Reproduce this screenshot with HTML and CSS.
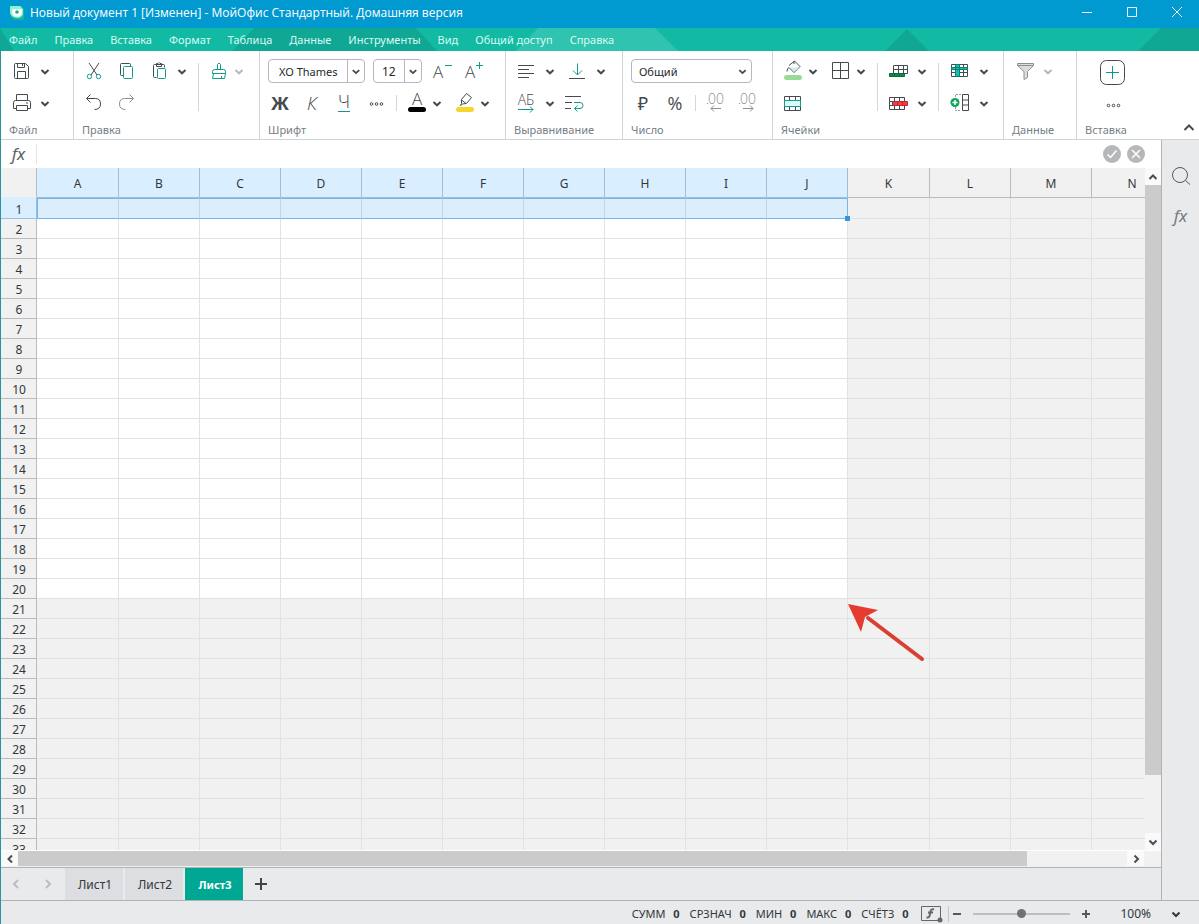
FILE: index.html
```html
<!DOCTYPE html>
<html lang="ru">
<head>
<meta charset="utf-8">
<title>Новый документ 1 [Изменен] - МойОфис Стандартный. Домашняя версия</title>
<link rel="stylesheet" href="styles.css">
</head>
<body>
<svg class="defs" aria-hidden="true">
  <symbol id="caret" viewBox="0 0 16 24"><path d="M4.500 11 8 14.300l3.500-3.300" fill="none" stroke="currentColor" stroke-width="2"/></symbol>
</svg>
<header class="titlebar">
  <svg class="logo" viewBox="0 0 16 16"><path d="M1 2q0-1 1-1h10l3 3v9q0 2-2 2H6Q1 13 1 8z" fill="#14b99c"/><path d="M1 2q0-1 1-1h9l3 3v5q-1 4-6 4Q1 12 1 7z" fill="#8ff0d2"/><path d="M4 5h8q1 6-4 6T4 5z" fill="#fff" stroke="#fff" stroke-width="1.500" stroke-linejoin="round"/><circle cx="8" cy="7" r="1.800" fill="#12ad98"/></svg>
  <h1 class="title">Новый документ 1 [Изменен] - МойОфис Стандартный. Домашняя версия</h1>
  <button class="win" aria-label="Свернуть"><svg viewBox="0 0 12 12"><path d="M1 6.500h10"/></svg></button>
  <button class="win" aria-label="Развернуть"><svg viewBox="0 0 12 12"><path d="M1.500 1.500h9v9h-9z"/></svg></button>
  <button class="win" aria-label="Закрыть"><svg viewBox="0 0 12 12"><path d="M1 1l10 10M11 1 1 11"/></svg></button>
</header>
<nav class="menubar">
  <svg class="pattern" aria-hidden="true"><path d="M0 0 14 23H0zM254 0h162l21 23H232zM885 23l22-22 22 22zM1161 0h2000v23H1138z" fill="#10a894"/><path d="M538 0h117l23 23H516z" fill="#30c3af"/></svg>
  <button>Файл</button><button>Правка</button><button>Вставка</button><button>Формат</button><button>Таблица</button><button>Данные</button><button>Инструменты</button><button>Вид</button><button>Общий доступ</button><button>Справка</button>
</nav>
<div class="frame">
<section class="ribbon">
  <div class="group g-file">
    <div class="tools">
      <div class="row">
        <button class="icon" aria-label="Сохранить"><svg viewBox="0 0 24 24"><path d="M5.500 5.500q0-1 1-1h10l3 3v11q0 1-1 1h-12q-1 0-1-1zM8.500 4.500v4h7v-4M13.500 5v2M8.500 19.500v-7h8v7"/></svg></button><button class="caret wide" aria-label="Варианты сохранения"><svg><use href="#caret"/></svg></button>
      </div>
      <div class="row">
        <button class="icon" aria-label="Печать"><svg viewBox="0 0 24 24"><path d="M7.500 9.500v-6h11v6M7.500 17.500h-3v-6q0-2 2-2h13q2 0 2 2v6h-3M7.500 14.500h11v5h-11zM17 12h2"/></svg></button><button class="caret wide" aria-label="Варианты печати"><svg><use href="#caret"/></svg></button>
      </div>
    </div>
    <h2>Файл</h2>
  </div>
  <div class="group g-edit">
    <div class="tools side">
      <div>
        <div class="row spaced">
          <button class="icon" aria-label="Вырезать"><svg viewBox="0 0 24 24"><path d="M7 4l8 12M17 4 9 16"/><g class="green"><circle cx="7.500" cy="17.500" r="2.200"/><circle cx="16.500" cy="17.500" r="2.200"/></g></svg></button>
          <button class="icon" aria-label="Копировать"><svg viewBox="0 0 24 24"><path d="M9.500 16.500h-2q-1 0-1-1v-10q0-1 1-1h8q1 0 1 1v2"/><rect class="green" x="9.500" y="7.500" width="9" height="12" rx="1"/></svg></button>
          <div class="split"><button class="icon" aria-label="Вставить"><svg viewBox="0 0 24 24"><path d="M10.500 18.500h-2q-1 0-1-1v-11q0-1 1-1h9q1 0 1 1v2M10.500 7.500v-3h1.500q1-2 2 0h1.500v3z"/><rect class="green" x="11.500" y="9.500" width="8" height="10" rx="1"/></svg></button><button class="caret wide" aria-label="Варианты вставки"><svg><use href="#caret"/></svg></button></div>
        </div>
        <div class="row spaced">
          <button class="icon" aria-label="Отменить"><svg viewBox="0 0 24 24"><path d="M8.500 3.500l-4 4 4 4M5 7.500h8.500q5 0 5 5.500t-6 5.500"/></svg></button>
          <button class="icon muted" aria-label="Повторить"><svg viewBox="0 0 24 24"><path d="M15.500 3.500l4 4-4 4M19 7.500h-8.500q-5 0-5 5.500t6 5.500"/></svg></button>
        </div>
      </div>
      <span class="sep"></span>
      <div class="row"><button class="icon" aria-label="Формат по образцу"><svg class="green" viewBox="0 0 24 24"><path d="M10.500 10.500v-5q1.500-3 3 0v5M5.500 14.500v-2q0-2 2-2h9q2 0 2 2v2zM6.500 14.500l-1 5h12l1-5M14.500 19v-2"/></svg></button><button class="caret faint" aria-label="Варианты образца"><svg><use href="#caret"/></svg></button></div>
    </div>
    <h2>Правка</h2>
  </div>
  <div class="group g-font">
    <div class="tools">
      <div class="row spaced">
        <span class="combo family"><select aria-label="Шрифт"><option>XO Thames</option></select><svg><use href="#caret"/></svg></span>
        <span class="combo size"><select aria-label="Размер шрифта"><option>12</option></select><svg><use href="#caret"/></svg></span>
        <button class="icon" aria-label="Уменьшить шрифт"><svg viewBox="0 0 24 24"><text x="3" y="19" class="t-letter">A</text><path class="green" d="M15 6.500h7"/></svg></button>
        <button class="icon" aria-label="Увеличить шрифт"><svg viewBox="0 0 24 24"><text x="3" y="19" class="t-letter">A</text><path class="green" d="M14 6.500h7M17.500 3v7"/></svg></button>
      </div>
      <div class="row spaced">
        <button class="icon txt bold" aria-label="Полужирный">Ж</button>
        <button class="icon txt italic" aria-label="Курсив">К</button>
        <button class="icon" aria-label="Подчеркнутый"><svg viewBox="0 0 24 24"><text x="12" y="17" class="t-big mid">Ч</text><path class="green" d="M6 20.500h12"/></svg></button>
        <button class="icon" aria-label="Другие параметры"><svg viewBox="0 0 24 24"><circle cx="7.500" cy="13" r="1.300"/><circle cx="12.500" cy="13" r="1.300"/><circle cx="17.500" cy="13" r="1.300"/></svg></button>
        <span class="sep short"></span>
        <div class="split"><button class="icon" aria-label="Цвет текста"><svg viewBox="0 0 24 24"><text x="12" y="14" class="t-letter mid">A</text><path d="M5.500 18.500h13" stroke="#000" stroke-width="5" stroke-linecap="round"/></svg></button><button class="caret" aria-label="Выбор цвета текста"><svg><use href="#caret"/></svg></button></div>
        <div class="split"><button class="icon" aria-label="Цвет выделения"><svg viewBox="0 0 24 24"><path d="M8.500 8.500l5-6 5 4-5 6-4 .5-2 1.500 1-2zM8.500 9l4.500 3.500"/><path d="M5.500 18.500h13" stroke="#f7d52c" stroke-width="5" stroke-linecap="round"/></svg></button><button class="caret" aria-label="Выбор цвета выделения"><svg><use href="#caret"/></svg></button></div>
      </div>
    </div>
    <h2>Шрифт</h2>
  </div>
  <div class="group g-align">
    <div class="tools">
      <div class="row">
        <button class="icon" aria-label="По левому краю"><svg viewBox="0 0 24 24"><path d="M4 6.500h16M4 10.500h11M4 14.500h16M4 18.500h11"/></svg></button><button class="caret wide" aria-label="Варианты выравнивания"><svg><use href="#caret"/></svg></button>
        <button class="icon next" aria-label="По нижнему краю"><svg viewBox="0 0 24 24"><path class="green" d="M12.500 4.500v11M8 11.500l4.500 4.500L17 11.500"/><path d="M4 19.500h16"/></svg></button><button class="caret wide" aria-label="Варианты по вертикали"><svg><use href="#caret"/></svg></button>
      </div>
      <div class="row">
        <button class="icon" aria-label="Направление текста"><svg viewBox="0 0 24 24"><text x="12" y="14" class="t-small mid">АБ</text><path class="green" d="M4 18.500h15M16 15.500l3 3-3 3"/></svg></button><button class="caret wide" aria-label="Варианты направления"><svg><use href="#caret"/></svg></button>
        <button class="icon" aria-label="Переносить текст"><svg viewBox="0 0 24 24"><path d="M3 5.500h16M3 11.500h7M3 17.500h6"/><path class="green" d="M12 11.500h6q3 0 3 3t-3 3h-5.500M15.500 14.500l-3 3 3 3"/></svg></button>
      </div>
    </div>
    <h2>Выравнивание</h2>
  </div>
  <div class="group g-num">
    <div class="tools">
      <div class="row"><span class="combo format"><select aria-label="Формат числа"><option>Общий</option></select><svg><use href="#caret"/></svg></span></div>
      <div class="row spaced">
        <button class="icon txt" aria-label="Денежный">₽</button>
        <button class="icon txt light" aria-label="Процентный">%</button>
        <span class="sep short"></span>
        <button class="icon muted" aria-label="Уменьшить разрядность"><svg viewBox="0 0 24 24"><text x="12" y="13" class="t-small mid">00</text><path d="M17 17.500H7M10 14.500l-3 3 3 3M3 12.500h1"/></svg></button>
        <button class="icon muted" aria-label="Увеличить разрядность"><svg viewBox="0 0 24 24"><text x="12" y="13" class="t-small mid">00</text><path d="M7 17.500h10M14 14.500l3 3-3 3M3 12.500h1"/></svg></button>
      </div>
    </div>
    <h2>Число</h2>
  </div>
  <div class="group g-cells">
    <div class="tools side">
      <div>
        <div class="row spaced">
          <div class="split"><button class="icon" aria-label="Заливка"><svg viewBox="0 0 24 24"><path d="M8 6.500l5.500-4.500L19 7.500l-6 6-5-5q-2 .5-2 4M13 5V2"/><path d="M9 8.500h9l-5 4.500z" fill="#d5eaf0" stroke="none"/><path d="M5.500 18.500h13" stroke="#98db98" stroke-width="5" stroke-linecap="round"/></svg></button><button class="caret" aria-label="Выбор заливки"><svg><use href="#caret"/></svg></button></div>
          <div class="split"><button class="icon" aria-label="Границы"><svg viewBox="0 0 24 24"><path d="M3.500 3.500h16v16h-16zM11.500 3.500v16M3.500 11.500h16"/></svg></button><button class="caret" aria-label="Варианты границ"><svg><use href="#caret"/></svg></button></div>
        </div>
        <div class="row"><button class="icon" aria-label="Объединить ячейки"><svg viewBox="0 0 24 24"><path d="M3.500 5.500h16v14h-16zM8.500 5.500v14M14.500 5.500v14"/><path d="M3.500 9.500h16v6h-16z" fill="#d9fbf6" stroke="#10a08c"/></svg></button></div>
      </div>
      <span class="sep"></span>
      <div>
        <div class="row"><button class="icon" aria-label="Вставить строку"><svg viewBox="0 0 24 24"><path d="M7.500 6.500h14v8h-14zM7.500 10.500h14M12.500 6.500v8M17.500 6.500v8"/><path d="M3.500 14.500h15v3h-15z" fill="#13854f" stroke="#086b3b"/><path d="M8.500 15v3M13.500 15v3" stroke="#086b3b"/></svg></button><button class="caret wide" aria-label="Варианты вставки строк"><svg><use href="#caret"/></svg></button></div>
        <div class="row"><button class="icon" aria-label="Удалить строку"><svg viewBox="0 0 24 24"><path d="M3.500 6.500h15v12h-15zM8.500 6.500v12M13.500 6.500v12"/><path d="M6.500 10.500h15v4h-15z" fill="#ed4149" stroke="#c2272f"/><path d="M11.500 11v3M16.500 11v3" stroke="#c2272f"/><path d="M3.500 10.500h3v4h-3z" fill="#fff"/></svg></button><button class="caret wide" aria-label="Варианты удаления строк"><svg><use href="#caret"/></svg></button></div>
      </div>
      <span class="sep"></span>
      <div>
        <div class="row"><button class="icon" aria-label="Закрепить область"><svg viewBox="0 0 24 24"><path d="M3.500 5.500h16v12h-16zM3.500 13.500h16M7.500 5.500v12M11.500 5.500v12M15.500 5.500v12"/><path d="M3.500 8.500h16v2h-16zM7.500 5.500h4v12h-4z" fill="#17c0a8" stroke="#0b8073"/></svg></button><button class="caret wide" aria-label="Варианты закрепления"><svg><use href="#caret"/></svg></button></div>
        <div class="row"><button class="icon" aria-label="Добавить ячейки"><svg viewBox="0 0 24 24"><path d="M14.500 3.500h6v16h-6zM14.500 9h6M14.500 14h6"/><path d="M13 3.500H7.500v16H13" stroke="#999" stroke-dasharray="2 1"/><circle cx="7" cy="11.500" r="4.500" fill="#0ca35b" stroke="none"/><path d="M4.500 11.500h5M7 9v5" stroke="#fff" stroke-width="1.500"/></svg></button><button class="caret wide" aria-label="Варианты добавления"><svg><use href="#caret"/></svg></button></div>
      </div>
    </div>
    <h2>Ячейки</h2>
  </div>
  <div class="group g-data">
    <div class="tools"><div class="row"><button class="icon muted" aria-label="Фильтр"><svg viewBox="0 0 24 24"><path d="M5.500 4.500h16v2l-6 6v6l-3.500 2v-8l-6.500-6z" fill="#ddd"/><path d="M6 6.500h15"/></svg></button><button class="caret wide faint" aria-label="Варианты фильтра"><svg><use href="#caret"/></svg></button></div></div>
    <h2>Данные</h2>
  </div>
  <div class="group g-insert">
    <div class="tools">
      <div class="row"><button class="icon large" aria-label="Вставка объекта"><svg viewBox="0 0 32 32"><rect x="4.500" y="5.500" width="24" height="24" rx="6"/><path class="green" d="M16.500 11v13M10 17.500h13"/></svg></button></div>
      <div class="row"><button class="icon large" aria-label="Ещё"><svg viewBox="0 0 32 32"><circle cx="12.500" cy="18.500" r="1.300"/><circle cx="17.500" cy="18.500" r="1.300"/><circle cx="22.500" cy="18.500" r="1.300"/></svg></button></div>
    </div>
    <h2>Вставка</h2>
  </div>
  <button class="collapse" aria-label="Свернуть панель"><svg viewBox="0 0 16 16"><path d="M3.500 10 8 5.500l4.500 4.500" stroke-width="2"/></svg></button>
</section>
<div class="body">
  <main class="work">
    <div class="formula">
      <label class="fx" for="formula">fx</label>
      <input id="formula" type="text">
      <button class="round" aria-label="Принять"><svg viewBox="0 0 18 18"><path d="M4.500 9.500l3 3 6-7"/></svg></button>
      <button class="round" aria-label="Отклонить"><svg viewBox="0 0 18 18"><path d="M5 5l8 8M13 5l-8 8"/></svg></button>
    </div>
    <div class="sheet">
      <div class="cells"><table id="grid"></table>
        <svg class="pointer" viewBox="0 0 80 60" aria-hidden="true"><path d="M20 14 74 55" stroke="#d93f33" stroke-width="4" stroke-linecap="round"/><path d="M0 0l30 6-13 7-4 15z" fill="#e53b30"/></svg>
      </div>
      <div class="vscroll"><button aria-label="Вверх"><svg viewBox="0 0 16 16"><path d="M4.500 10 8 6.500l3.500 3.500"/></svg></button><div class="lane"><span class="thumb"></span></div><button aria-label="Вниз"><svg viewBox="0 0 16 16"><path d="M4.500 6.500 8 10l3.500-3.500"/></svg></button></div>
    </div>
    <div class="hscroll"><button aria-label="Влево"><svg viewBox="0 0 16 16"><path d="M10 4.500 6.500 8l3.500 3.500"/></svg></button><div class="lane"><span class="thumb"></span></div><button aria-label="Вправо"><svg viewBox="0 0 16 16"><path d="M6.500 4.500 10 8l-3.500 3.500"/></svg></button></div>
    <div class="tabs">
      <button class="step" aria-label="Предыдущий лист"><svg viewBox="0 0 16 16"><path d="M10 4 6 8l4 4"/></svg></button>
      <button class="step" aria-label="Следующий лист"><svg viewBox="0 0 16 16"><path d="M6 4l4 4-4 4"/></svg></button>
      <button class="tab">Лист1</button><button class="tab">Лист2</button><button class="tab active">Лист3</button>
      <button class="add" aria-label="Добавить лист"><svg viewBox="0 0 16 16"><path d="M2 8h12M8 2v12"/></svg></button>
    </div>
  </main>
  <aside class="panel">
    <button aria-label="Поиск"><svg viewBox="0 0 24 24"><circle cx="11" cy="11" r="7.500"/><path d="M16.500 16.500 21 20.500"/></svg></button>
    <button class="fx">fx</button>
  </aside>
</div>
<footer class="status">
  <span>СУММ <b>0</b></span><span>СРЗНАЧ <b>0</b></span><span>МИН <b>0</b></span><span>МАКС <b>0</b></span><span>СЧЁТЗ <b>0</b></span>
  <div class="view">
    <button class="fn" aria-label="Функции"><svg viewBox="0 0 24 18"><path d="M1.500 1.500h19v14h-19z"/><path d="M14 4.500q-3-1-3.500 2L9.500 11q-.5 2-3 1.500M8 7.500h5" stroke-width="2"/><circle cx="20" cy="15" r="2.500" fill="#666" stroke="none"/></svg></button>
    <div class="zoom">
      <button aria-label="Мельче"><svg viewBox="0 0 16 16"><path d="M4 8h8"/></svg></button>
      <input type="range" min="0" max="100" value="50" aria-label="Масштаб">
      <button aria-label="Крупнее"><svg viewBox="0 0 16 16"><path d="M4 8h8M8 4v8"/></svg></button>
    </div>
  </div>
  <button class="percent">100%<svg viewBox="0 0 16 16"><path d="M4.500 6.500 8 10l3.500-3.500"/></svg></button>
</footer>
</div>
<script src="script.js"></script>
</body>
</html>
```
FILE: styles.css
```css
* { box-sizing: border-box; }
body {
  margin: 0;
  height: 100vh;
  display: flex;
  flex-direction: column;
  overflow: hidden;
  font: 12px/16px "Noto Sans", sans-serif;
  color: #33373b;
}
button { border: 0; padding: 0; background: none; font: inherit; color: inherit; display: flex; align-items: center; justify-content: center; flex: none; }
svg { display: block; fill: none; stroke: currentColor; flex: none; }
.defs { position: absolute; width: 0; height: 0; }

.titlebar { flex: none; height: 28px; display: flex; align-items: center; padding-left: 9px; background: #0099d0; color: #fff; }
.logo { width: 16px; height: 16px; stroke: none; margin-bottom: 2px; }
.title { flex: 1; margin: 0 0 0 5px; font: 400 12px/26px "Open Sans", "Noto Sans", sans-serif; padding-bottom: 2px; white-space: nowrap; }
.win { width: 45px; height: 24px; margin-bottom: 4px; }
.win svg { width: 12px; height: 12px; }

.menubar { flex: none; position: relative; height: 23px; display: flex; align-items: center; gap: 17px; padding-left: 9px; background: #12baa4; color: #d8fbf3; font-size: 11px; overflow: hidden; }
.menubar button { position: relative; padding-top: 1px; }
.pattern { position: absolute; inset: 0; width: 100%; height: 100%; stroke: none; }

.frame { flex: 1; min-height: 0; display: flex; flex-direction: column; border-left: 1px solid #2b93a0; }

.ribbon { flex: none; position: relative; display: flex; background: #fff; border-bottom: 1px solid #d0d3d6; color: #454a4f; }
.group { display: flex; flex-direction: column; padding: 4px 0 0 8px; border-right: 1px solid #d0d3d6; }
.group h2 { margin: 0; padding-top: 2px; font-size: 11px; font-weight: 400; line-height: 18px; color: #767d84; }
.g-file { width: 73px; }
.g-edit { width: 186px; }
.g-font { width: 246px; }
.g-align { width: 117px; }
.g-num { width: 150px; }
.g-cells { width: 231px; }
.g-data { width: 73px; }
.g-insert { flex: 1; border-right: 0; }
.tools { height: 64px; }
.side { display: flex; }
.row { display: flex; align-items: center; height: 32px; }
.spaced { gap: 8px; }
.split { display: flex; }
.icon { width: 24px; height: 32px; }
.icon svg { width: 24px; height: 24px; overflow: visible; }
.large, .large svg { width: 32px; height: 32px; }
.g-insert .row { padding-left: 11px; }
.caret { width: 16px; height: 32px; }
.caret svg { width: 16px; height: 24px; }
.wide { width: 24px; }
.next { margin-left: 3px; }
.muted { color: #8c8f92; }
.faint { color: #b5b8ba; }
.green { stroke: #12998a; }
.sep { width: 1px; height: 48px; margin: 8px 8px 0 4px; background: #d5d8da; }
.short { height: 16px; margin: 0; }
.g-cells .sep:nth-of-type(1) { margin-left: 8px; }
.g-cells .sep:nth-of-type(2) { margin-right: 9px; }
.txt { font-size: 18px; }
.bold { font-weight: 700; }
.light { font-family: "Open Sans", "Noto Sans", sans-serif; }
.italic { font-family: "Open Sans", "Noto Sans", sans-serif; font-style: italic; font-weight: 300; }
.icon text { fill: currentColor; stroke: none; font-family: "Open Sans", "Noto Sans", sans-serif; font-weight: 300; }
.mid { text-anchor: middle; }
.t-letter { font-size: 17px; }
.t-big { font-size: 18px; }
.t-small { font-size: 14px; }

.combo { position: relative; height: 24px; border: 1px solid #b9b4c0; border-radius: 4px; }
.combo select { appearance: none; width: 100%; height: 100%; border: 0; padding: 1px 18px 0 10px; background: none; font: inherit; font-size: 11px; color: #26292c; }
.combo svg { position: absolute; top: 0; right: 0; width: 17px; height: 22px; border-left: 1px solid #b9b4c0; pointer-events: none; }
.family { width: 97px; }
.size { width: 49px; }
.size select { padding-left: 8px; font-size: 12px; }
.format { width: 121px; }
.format select { padding-left: 7px; }
.format svg { border: 0; }
.collapse { position: absolute; right: 2px; bottom: 3px; width: 16px; height: 16px; }
.collapse svg { width: 16px; height: 16px; }

.body { flex: 1; min-height: 0; display: flex; }
.work { flex: 1; min-width: 0; display: flex; flex-direction: column; border-right: 1px solid #b0b3b6; }
.formula { flex: none; height: 28px; display: flex; align-items: center; gap: 6px; padding-right: 16px; background: #fff; }
.fx { font-size: 17px; font-style: italic; color: #5c6064; text-align: center; }
.formula .fx { width: 36px; line-height: 20px; border-right: 1px solid #e2e4e6; }
.formula input { flex: 1; height: 24px; border: 0; outline: 0; font: inherit; }
.round { width: 18px; height: 18px; border-radius: 9px; background: #b5b7b9; color: #fff; }
.round svg { width: 18px; height: 18px; stroke-width: 1.5px; }

.sheet { flex: 1; min-height: 0; display: flex; }
.cells { position: relative; flex: 1; min-width: 0; overflow: hidden; background: #f1f1f1; }
table { table-layout: fixed; width: 1172px; border-spacing: 0; }
th, td { padding: 0; border: solid #e1e2e2; border-width: 0 1px 1px 0; }
th { font-weight: 400; color: #33373b; background: #f1f1f1; border-color: #b9bcbf; overflow: hidden; }
.col-side { width: 36px; }
.col { width: 81px; }
.col-edge { width: 82px; }
thead tr { height: 30px; }
thead th { padding-top: 2px; }
tbody tr { height: 20px; }
tbody tr:first-child { height: 21px; }
tbody th { line-height: 17px; padding: 2px 0 0 1px; }
td.page { background: #fff; }
thead th:first-child { border-bottom-color: #d9efff; }
th.marked { background: #d9efff; border-color: #9fbfd8; }
td.selected { position: relative; background: #dcedfc; border-top: 1px solid #79b4e6; border-bottom-color: #79b4e6; border-right-color: #bcd6ec; }
td.selected:nth-child(2) { border-left: 1px solid #79b4e6; }
td.selected:nth-child(11) { border-right-color: #79b4e6; }
.handle { position: absolute; right: -3px; bottom: -3px; width: 5px; height: 5px; background: #3794dd; z-index: 1; }
.pointer { position: absolute; left: 847px; top: 436px; width: 80px; height: 60px; stroke: none; }

.vscroll { flex: none; width: 16px; display: flex; flex-direction: column; background: #f1f1f1; }
.vscroll button, .hscroll button { width: 16px; height: 17px; background: #fafafa; color: #4b4e51; }
.hscroll button { width: 17px; height: 15px; }
.vscroll svg, .hscroll svg { width: 16px; height: 16px; stroke-width: 2px; }
.lane { flex: 1; }
.thumb { display: block; background: #cbcbcb; }
.vscroll .thumb { height: 91%; }
.hscroll { flex: none; height: 17px; display: flex; background: #f1f1f1; border-top: 1px solid #fff; padding-right: 17px; }
.hscroll .thumb { width: 91%; height: 15px; }

.tabs { flex: none; height: 33px; display: flex; gap: 2px; background: #e8eaec; border-top: 1px solid #b0b3b6; }
.step { width: 30px; color: #bbbec1; }
.step svg { width: 16px; height: 16px; stroke-width: 2px; }
.tab { width: 58px; padding: 2px 0 0 2px; background: #dcdee1; }
.active { background: #00a893; color: #fff; font-weight: 700; font-size: 11px; }
.add { width: 32px; color: #414548; }
.add svg { width: 16px; height: 16px; stroke-width: 2px; }
.panel { flex: none; width: 37px; display: flex; flex-direction: column; align-items: center; gap: 16px; padding-top: 24px; background: #e8eaec; color: #54585c; }
.panel button { width: 24px; height: 24px; }
.panel svg { width: 24px; height: 24px; }
.panel .fx { color: #777b7e; }

.status { flex: none; height: 24px; display: flex; align-items: center; justify-content: flex-end; gap: 10px; padding-right: 15px; background: #e8eaec; border-top: 1px solid #b0b3b6; font-size: 11px; padding-top: 2px; white-space: nowrap; }
.status b { margin-left: 5px; }
.status svg { width: 16px; height: 16px; stroke-width: 2px; }
.view { display: flex; align-items: center; gap: 2px; }
.fn { width: 28px; color: #666; }
.status .fn svg { width: 24px; height: 18px; stroke-width: 1px; }
.zoom { display: flex; align-items: center; gap: 8px; border-left: 1px solid #c4c7c9; color: #55595c; }
.zoom input { appearance: none; width: 97px; height: 16px; margin: 0; background: none; }
.zoom input::-webkit-slider-runnable-track { height: 2px; background: #bcbfc1; }
.zoom input::-webkit-slider-thumb { appearance: none; width: 9px; height: 9px; margin-top: -4px; border-radius: 5px; background: #707376; }
.percent { gap: 17px; margin-left: 16px; font-size: 12px; }
```
FILE: script.js
```js
const letters = "ABCDEFGHIJKLMN".split("");
const pageCols = 10;
const pageRows = 20;
const rowCount = 33;

const cols = letters.map((c) => `<col class="${c === "A" || c === "K" ? "col-edge" : "col"}">`).join("");
const head = letters.map((c, i) => `<th scope="col"${i < pageCols ? ' class="marked"' : ""}>${c}</th>`).join("");

let rows = "";
for (let r = 1; r <= rowCount; r++) {
  rows += `<tr><th scope="row"${r === 1 ? ' class="marked"' : ""}>${r}</th>`;
  for (let c = 0; c < letters.length; c++) {
    const inPage = c < pageCols && r <= pageRows;
    const kind = inPage ? (r === 1 ? "selected" : "page") : "";
    const handle = r === 1 && c === pageCols - 1 ? '<span class="handle"></span>' : "";
    rows += `<td class="${kind}">${handle}</td>`;
  }
  rows += "</tr>";
}

document.getElementById("grid").innerHTML =
  `<colgroup><col class="col-side">${cols}</colgroup><thead><tr><th></th>${head}</tr></thead><tbody>${rows}</tbody>`;
```
